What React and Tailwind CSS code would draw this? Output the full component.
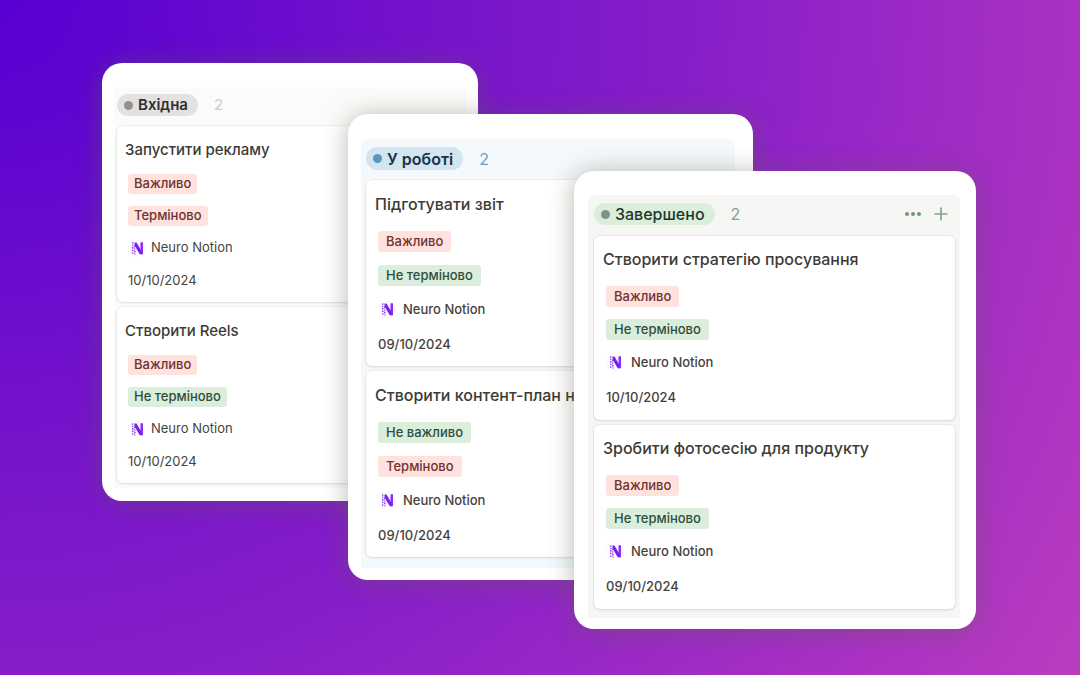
import React from 'react'
import { Plus } from 'lucide-react'

// ================================================================
// BOARD DATA
// ================================================================
const columns = [
  {
    id: 'inbox',
    label: 'Вхідна',
    tasks: [
      { title: 'Запустити рекламу', tags: [['Важливо', 'red'], ['Терміново', 'red']], date: '10/10/2024' },
      { title: 'Створити Reels', tags: [['Важливо', 'red'], ['Не терміново', 'green']], date: '10/10/2024' },
    ],
  },
  {
    id: 'progress',
    label: 'У роботі',
    tasks: [
      { title: 'Підготувати звіт', tags: [['Важливо', 'red'], ['Не терміново', 'green']], date: '09/10/2024' },
      { title: 'Створити контент-план н', tags: [['Не важливо', 'green'], ['Терміново', 'red']], date: '09/10/2024' },
    ],
  },
  {
    id: 'done',
    label: 'Завершено',
    actions: true,
    tasks: [
      { title: 'Створити стратегію просування', tags: [['Важливо', 'red'], ['Не терміново', 'green']], date: '10/10/2024' },
      { title: 'Зробити фотосесію для продукту', tags: [['Важливо', 'red'], ['Не терміново', 'green']], date: '09/10/2024' },
    ],
  },
]

// ================================================================
// COLUMN STYLES
// ================================================================
const styles = {
  inbox: {
    panel: 'col-start-1 col-end-3 mt-[63px] pt-6 pb-[13px] pl-3 pr-3',
    column: 'bg-[#fbfbfa] pt-[7px] pb-[5px] pl-[3px] pr-[3px]',
    header: 'h-[22px] mb-[10px]',
    pill: 'bg-[#e3e2e0] text-[#32302c] text-[15px] font-semibold',
    dot: 'bg-[#91918e]',
    count: 'text-[#cdcdcb] text-[15px]',
    card: 'pt-[13px] pb-[11px] pl-2',
    title: 'leading-[21px] mb-[14px] text-[15px]',
    fields: 'gap-3',
    row: 'h-5',
    tag: 'px-[6px]',
    name: 'gap-[6px] text-[13px]',
    date: 'mt-px text-[13px]',
  },
  progress: {
    panel: 'col-start-2 col-end-5 mt-[114px] pt-[25px] pb-3 pl-[13px] pr-[18px]',
    column: 'bg-[#f3f9fc] pt-2 pb-[11px] pl-[5px] pr-[5px]',
    header: 'h-[23px] mb-[10px]',
    pill: 'bg-[#d3e5ef] text-[#183347] text-[16px] font-semibold',
    dot: 'bg-[#5b97bd]',
    count: 'text-[#6a9fc2] text-[16px]',
    card: 'pt-[14px] pb-[11px] pl-[9px]',
    title: 'leading-[21px] mb-4 text-[16px]',
    fields: 'gap-[13px]',
    row: 'h-[21px]',
    tag: 'px-2',
    name: 'gap-2 text-[13px] font-medium',
    date: 'mt-px text-[13px] font-medium',
  },
  done: {
    panel: 'col-start-4 col-end-6 mt-[171px] pt-6 pb-[11px] pl-[14px] pr-4',
    column: 'bg-[#f6f7f5] pt-2 pb-[9px] pl-[6px] pr-[5px]',
    header: 'h-[22px] mb-[11px]',
    pill: 'bg-[#dbeddb] text-[#1c3829] text-[16px] font-medium',
    dot: 'bg-[#7b9485]',
    count: 'text-[#83a18f] text-[16px]',
    card: 'pt-[13px] pb-3 pl-[9px]',
    title: 'leading-[21px] mb-4 text-[16px]',
    fields: 'gap-3',
    row: 'h-[21px]',
    tag: 'px-2',
    name: 'gap-2 text-[13px] font-medium',
    date: 'mt-[2px] text-[13px] font-medium',
  },
}

const tagColors = {
  red: 'bg-[#ffe2dd] text-[#6f3230]',
  green: 'bg-[#dbeddb] text-[#2f4f3e]',
}

// ================================================================
// LOGO
// ================================================================
const NeuroLogo = () => (
  <svg className="w-[17px] h-[17px] shrink-0" viewBox="0 0 34 34" aria-hidden="true">
    <circle cx="17" cy="17" r="16" fill="#fff" stroke="#efeff2" strokeWidth="1" />
    <path d="M25 4.500h5v24h-5z" fill="#8b2df5" />
    <path d="M13 5l4 0 10 17v6.500h-3.500L13 11z" fill="#7320f2" />
    <g fill="#8b3df5">
      <circle cx="9.500" cy="6" r="1.700" />
      <circle cx="9.500" cy="10.500" r="1.500" />
      <circle cx="13.500" cy="13" r="1.700" />
      <circle cx="9.500" cy="15.500" r="1.800" />
      <circle cx="13.500" cy="18" r="1.500" />
      <circle cx="9.500" cy="20.500" r="1.700" />
      <circle cx="13.500" cy="23" r="1.800" />
      <circle cx="9.500" cy="26" r="1.700" />
      <circle cx="14" cy="28" r="1.300" />
    </g>
  </svg>
)

// ================================================================
// TASK CARD
// ================================================================
const TaskCard = ({ task, s }) => (
  <article className={`bg-white rounded-md pr-2 overflow-hidden shadow-[0_0_0_1px_rgba(15,15,15,0.04),0_1px_3px_rgba(15,15,15,0.1)] ${s.card}`}>
    <h3 className={`font-medium text-[#3d3b36] whitespace-nowrap ${s.title}`}>{task.title}</h3>
    <div className={`flex flex-col items-start pl-[3px] text-[#45433e] ${s.fields}`}>
      {task.tags.map(([text, color]) => (
        <span key={text} className={`flex items-center rounded-[3px] text-[13px] font-medium ${s.row} ${s.tag} ${tagColors[color]}`}>
          {text}
        </span>
      ))}
      <div className={`flex items-center ${s.row} ${s.name}`}>
        <NeuroLogo />
        <span>Neuro Notion</span>
      </div>
      <time className={`flex items-center ${s.row} ${s.date}`}>{task.date}</time>
    </div>
  </article>
)

// ================================================================
// COLUMN
// ================================================================
const Column = ({ column }) => {
  const s = styles[column.id]

  return (
    <section className={`row-start-1 min-w-0 rounded-[20px] bg-white shadow-[0_2px_26px_rgba(95,95,80,0.45)] ${s.panel}`}>
      <div className={`rounded-t-md ${s.column}`}>
        <header className={`flex items-center ${s.header}`}>
          <h2 className={`flex h-full items-center gap-[5px] rounded-full pl-[7px] pr-[10px] whitespace-nowrap ${s.pill}`}>
            <span className={`w-[9px] h-[9px] rounded-full ${s.dot}`} />
            {column.label}
          </h2>
          <span className={`ml-4 ${s.count}`}>{column.tasks.length}</span>
          {column.actions && (
            <div className="ml-auto mr-1 flex items-center gap-2 text-[#83a18f]">
              <button type="button" aria-label="Ще">
                <svg className="w-5 h-5" viewBox="0 0 20 20" fill="#6f9480" aria-hidden="true">
                  <circle cx="4" cy="10" r="2" />
                  <circle cx="10" cy="10" r="2" />
                  <circle cx="16" cy="10" r="2" />
                </svg>
              </button>
              <button type="button" aria-label="Додати">
                <Plus size={20} strokeWidth={2} />
              </button>
            </div>
          )}
        </header>
        <div className="flex flex-col gap-[5px]">
          {column.tasks.map((task) => (
            <TaskCard key={task.title} task={task} s={s} />
          ))}
        </div>
      </div>
    </section>
  )
}

// ================================================================
// MAIN APP COMPONENT
// ================================================================
function App() {
  return (
    <main className="min-h-screen bg-[radial-gradient(circle_at_0_0,#5800d4_0%,#5e05d0_10%,#7010cc_28%,#861dc9_53%,#a932c3_85%,#ba3dbf_100%)] pl-[102px] pr-[104px] pb-11 font-['Inter',sans-serif]">
      <div className="grid grid-cols-[246fr_130fr_96fr_179fr_223fr] items-start">
        {columns.map((column) => (
          <Column key={column.id} column={column} />
        ))}
      </div>
    </main>
  )
}

export default App
